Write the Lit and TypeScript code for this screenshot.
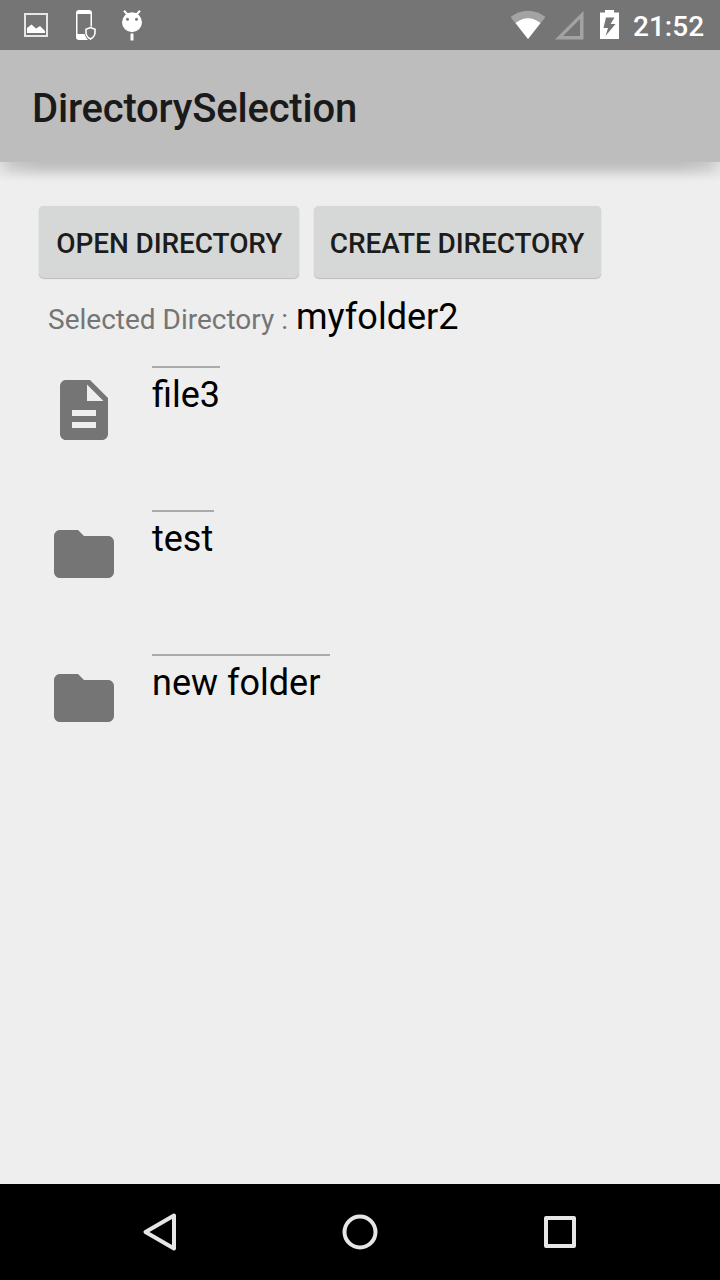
import { LitElement, html, css, svg } from "lit";
import { customElement } from "lit/decorators.js";

type Entry = { name: string; kind: "file" | "folder"; width: number };

const ENTRIES: Entry[] = [
  { name: "file3", kind: "file", width: 68 },
  { name: "test", kind: "folder", width: 62 },
  { name: "new folder", kind: "folder", width: 178 },
];

const GLYPHS = {
  file: svg`<path d="M14 2H6c-1.1 0-1.99.9-1.99 2L4 20c0 1.1.89 2 1.99 2H18c1.1 0 2-.9 2-2V8l-6-6zm2 16H8v-2h8v2zm0-4H8v-2h8v2zm-3-5V3.500L18.500 9H13z"/>`,
  folder: svg`<path d="M10 4H4c-1.100 0-1.990.9-1.990 2L2 18c0 1.100.9 2 2 2h16c1.100 0 2-.9 2-2V8c0-1.100-.9-2-2-2h-8l-2-2z"/>`,
};

@customElement("app-root")
export class AppRoot extends LitElement {
  static styles = css`
    :host {
      display: flex;
      flex-direction: column;
      width: 720px;
      height: 1280px;
      overflow: hidden;
      background: #eee;
      font-family: Roboto, sans-serif;
      color: #000;
    }
    svg { display: block; flex: none; }
    .status {
      height: 50px;
      flex: none;
      background: #757575;
      display: flex;
      justify-content: space-between;
    }
    .right { display: flex; }
    .clock {
      width: 87px;
      font-size: 28px;
      font-weight: 500;
      line-height: 54px;
      color: #fff;
      white-space: nowrap;
    }
    .toolbar {
      position: relative;
      height: 112px;
      flex: none;
      box-sizing: border-box;
      padding: 4px 0 0 32px;
      background: #bdbdbd;
      display: flex;
      align-items: center;
      font-size: 40px;
      font-weight: 500;
      letter-spacing: -0.2px;
      color: #1a1a1a;
    }
    .toolbar::after {
      content: "";
      position: absolute;
      top: 100%;
      left: 0;
      right: 0;
      height: 20px;
      background: linear-gradient(
        rgba(0, 0, 0, 0.205),
        rgba(0, 0, 0, 0.19) 15%,
        rgba(0, 0, 0, 0.125) 45%,
        rgba(0, 0, 0, 0.04) 75%,
        transparent
      );
      mask-image: linear-gradient(
        to right,
        rgba(0, 0, 0, 0.35),
        rgba(0, 0, 0, 0.75) 12px,
        #000 40px,
        #000 calc(100% - 40px),
        rgba(0, 0, 0, 0.75) calc(100% - 12px),
        rgba(0, 0, 0, 0.35)
      );
    }
    .content { flex: 1; padding: 44px 39px 0; }
    .buttons { display: flex; gap: 15px; }
    button {
      height: 72px;
      padding: 2px 0 0;
      border: 0;
      border-radius: 5px;
      background: #d6d8d7;
      box-shadow: 0 1px 1px rgba(0, 0, 0, 0.2), 0 0 1px rgba(0, 0, 0, 0.12);
      font: 500 28px Roboto, sans-serif;
      letter-spacing: -0.1px;
      color: #1c1c1c;
      white-space: nowrap;
    }
    .open { width: 259.500px; padding-left: 1px; }
    .create { width: 287px; }
    .selected {
      display: flex;
      align-items: baseline;
      padding: 18px 0 0 9px;
      height: 70px;
      line-height: 42px;
      white-space: pre;
    }
    .label { width: 248px; font-size: 28px; color: #757575; }
    .value { font-size: 36px; }
    .row { display: flex; height: 144px; padding-left: 9px; }
    .icon { margin-top: 8px; fill: #757575; }
    .name {
      margin-left: 32px;
      align-self: flex-start;
      border-top: 2px solid #aaa;
      font-size: 36px;
      line-height: 42px;
      padding-top: 6px;
      white-space: nowrap;
    }
    .nav {
      height: 96px;
      flex: none;
      background: #000;
      display: flex;
      justify-content: center;
    }
    .nav svg { width: 200px; height: 96px; fill: none; stroke: #e6e6e6; stroke-width: 4; stroke-linejoin: round; }
  `;

  render() {
    return html`
      <div class="status">
        <svg width="160" height="50" viewBox="0 0 160 50" fill="#fff">
          <path d="M25 14H47V36H25Z" fill="none" stroke="#e6e6e6" stroke-width="2" />
          <path d="M27 33V28L31.500 24.500L36 28.500L40 26L45 31V33Z" />
          <path fill-rule="evenodd" d="M79 10h10q3 0 3 3v13.500h-1.500V14H77.500v20H84.500q1 3.500 3.500 6H79q-3 0-3-3V13q0-3 3-3z" />
          <path d="M90.500 27.500L95 29.300V33Q94.500 37 90.500 39Q86.500 37 86 33V29.300Z" fill="none" stroke="#fff" stroke-width="1.600" />
          <path fill-rule="evenodd" d="M132 12.300a10 10 0 1 1 0 20a10 10 0 1 1 0-20zM127.500 17.800a1.500 1.500 0 1 0 0 3a1.500 1.500 0 1 0 0-3zM136.500 17.800a1.500 1.500 0 1 0 0 3a1.500 1.500 0 1 0 0-3z" />
          <path d="M124 10.700L128 15M140 10.700L136 15" stroke="#fff" stroke-width="2" />
          <path d="M130.500 33.500h3v7h-3z" />
        </svg>
        <div class="right">
          <svg width="123" height="50" viewBox="510 0 123 50" fill="#fff">
            <path d="M510.500 17Q528 4.500 545.500 17L528 39Z" fill="#a3a3a3" />
            <path d="M515.500 23Q528 13.500 540.500 23L528 39Z" />
            <path d="M583.500 11V39.500H555L583.500 11ZM580 19L563 36H580Z" fill="#a3a3a3" fill-rule="evenodd" />
            <path fill-rule="evenodd" d="M605 10h9v2.500h5V39h-19V12.500h5zM606 17.500l-2.500 10.500h4.500l-2.500 8l10-12h-5l4-6.500z" />
          </svg>
          <span class="clock">21:52</span>
        </div>
      </div>
      <div class="toolbar"><span>DirectorySelection</span></div>
      <div class="content">
        <div class="buttons">
          <button class="open">OPEN DIRECTORY</button>
          <button class="create">CREATE DIRECTORY</button>
        </div>
        <div class="selected"><span class="label">Selected Directory : </span><span class="value">myfolder2</span></div>
        ${ENTRIES.map(
          (e) => html`<div class="row">
            <svg class="icon" width="72" height="72" viewBox="0 0 24 24">${GLYPHS[e.kind]}</svg>
            <span class="name" style="width:${e.width}px">${e.name}</span>
          </div>`
        )}
      </div>
      <div class="nav">
        <svg viewBox="60 0 200 96"><path d="M174 31.500L145.500 48L174 64.500Z" /></svg>
        <svg viewBox="260 0 200 96"><circle cx="360" cy="48" r="15.500" /></svg>
        <svg viewBox="460 0 200 96"><rect x="546" y="34" width="28" height="28" /></svg>
      </div>
    `;
  }
}
